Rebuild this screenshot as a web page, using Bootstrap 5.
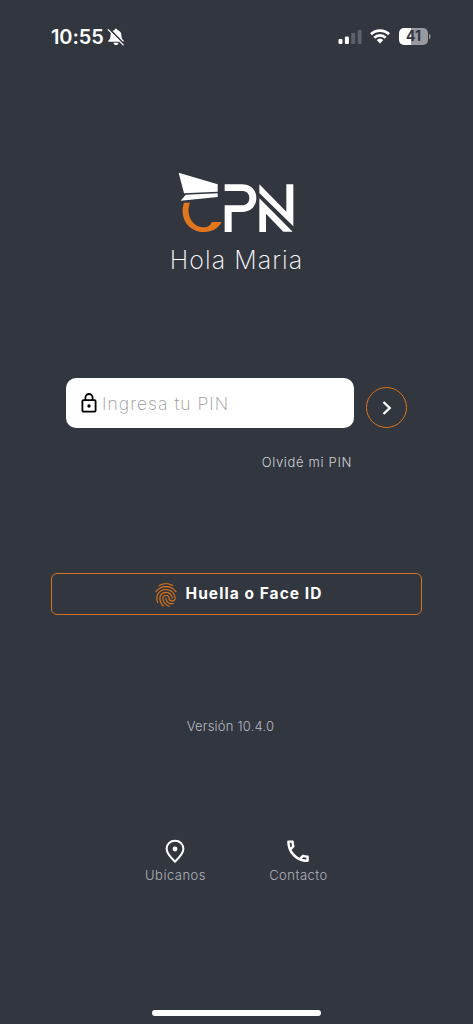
<!DOCTYPE html>
<html lang="es">

<head>
    <meta charset="UTF-8">
    <meta name="viewport" content="width=device-width, initial-scale=1.0">
    <title>CPN</title>
    <link rel="stylesheet" href="https://cdn.jsdelivr.net/npm/bootstrap@5.3.3/dist/css/bootstrap.min.css">
    <style>
        body {
            background: #32363f;
            color: #fff;
            font-family: Inter, "Open Sans", sans-serif;
            font-weight: 300;
            line-height: 1;
        }

        svg {
            display: block;
            flex: none;
        }

        .screen {
            height: 1024px;
            overflow: hidden;
        }

        .status-bar {
            height: 73px;
            padding: 0 42px 0 51px;
        }

        .clock {
            font-size: 20px;
            font-weight: 600;
            letter-spacing: -.1px;
        }

        .bell {
            margin-left: 3px;
        }

        .wifi {
            margin: 0 8px;
        }

        .brand {
            margin-top: 99px;
        }

        .logo {
            margin-right: 2px;
        }

        .greeting {
            font-size: 25px;
            font-weight: 200;
            letter-spacing: 1.05px;
            margin: 12px 0 0;
            height: 30px;
            white-space: nowrap;
        }

        .pin-row {
            margin: 103px 66px 0;
            height: 51px;
        }

        .pin-box {
            width: 288px;
            height: 50px;
            border-radius: 10px;
            padding-left: 15px;
        }

        .pin-input {
            color: #999;
            font-size: 17.5px;
            font-weight: 200;
            letter-spacing: 1.05px;
            padding: 3px 0 0 5px;
            background: transparent;
        }

        .pin-input::placeholder {
            color: #999;
            opacity: 1;
        }

        .go-btn {
            width: 41px;
            height: 41px;
            border: 1px solid #dd7519;
            margin: 9px 0 0 12px;
        }

        .forgot {
            color: #cfd1d5;
            font-size: 13px;
            letter-spacing: .66px;
            margin: 27px 121px 0 0;
            height: 14px;
        }

        .bio-btn {
            margin: 103px 51px 0;
            height: 42px;
            border: 1px solid #d47421;
            border-radius: 6px;
            color: #fff;
            font-size: 15.5px;
            font-weight: 700;
            letter-spacing: 1.05px;
        }

        .bio-btn:hover,
        .go-btn:hover {
            border-color: #f08a2c;
        }

        .bio-icon {
            margin: 1px 8px 0 3px;
        }

        .version {
            color: #b9bbc0;
            font-size: 13px;
            letter-spacing: .2px;
            margin: 105px 12px 0 0;
            height: 14px;
        }

        .links {
            margin-top: 105px;
            gap: 63px;
        }

        .links a {
            color: #b1b4ba;
            font-size: 13px;
            letter-spacing: .5px;
            width: 60px;
            white-space: nowrap;
        }

        .link-label {
            margin: 5px 0 0 1px;
        }

        .home-bar {
            width: 169px;
            height: 6px;
            margin-bottom: 8px;
        }
    </style>
</head>

<body>
    <div class="screen d-flex flex-column">
        <header class="status-bar d-flex align-items-center">
            <span class="clock">10:55</span>
            <svg class="bell" width="18" height="18" viewBox="0 0 18 18">
                <path fill="#fff" d="M9 .8c.8 0 1.300.5 1.400 1.200 2.600.7 4 2.700 4 5 0 3 .7 4.300 2.200 5.600.5.5.2 1.200-.5 1.200H1.900c-.7 0-1-.7-.5-1.200C2.900 11.300 3.600 10 3.600 7c0-2.300 1.400-4.300 4-5C7.700 1.300 8.200.8 9 .8zM6.500 14.700h5c-.2 1.500-1.200 2.400-2.500 2.400s-2.300-.9-2.500-2.400z" />
                <path stroke="#32363f" stroke-width="1.800" d="M2.600 1.200l14.700 15.200" />
                <path stroke="#fff" stroke-width="1.300" stroke-linecap="round" d="M1.200 1.600l15 15.300" />
            </svg>
            <div class="d-flex align-items-center ms-auto">
                <svg width="24" height="16" viewBox="0 0 24 16" fill="#fff">
                    <rect x="0.500" y="10" width="4" height="5" rx="1" />
                    <rect x="6.900" y="7.500" width="4" height="7.500" rx="1" />
                    <rect x="13.200" y="4" width="4" height="11" rx="1" fill="#5e616a" />
                    <rect x="19.600" y="1" width="4" height="14" rx="1" fill="#5e616a" />
                </svg>
                <svg class="wifi" width="20" height="15" viewBox="0 0 20 15" fill="none" stroke="#fff" stroke-width="2.800">
                    <path d="M1 5.300a12.800 12.800 0 0 1 18 0M4.300 8.700a8.200 8.200 0 0 1 11.400 0" />
                    <path fill="#fff" stroke="none" d="M6.700 11a4.800 4.800 0 0 1 6.600 0L10 14.500z" />
                </svg>
                <svg width="33" height="17" viewBox="0 0 33 17">
                    <path fill="#989a9f" d="M6 0h19a5 5 0 0 1 5 5v7a5 5 0 0 1-5 5H6z" />
                    <path fill="#fff" d="M6 0H13v17H6A5 5 0 0 1 1 12V5a5 5 0 0 1 5-5z" />
                    <path fill="#989a9f" d="M31 5.800c2 .8 2 4.600 0 5.400z" />
                    <text x="15.500" y="13.400" text-anchor="middle" font-size="14" font-weight="700" fill="#32363f">41</text>
                </svg>
            </div>
        </header>

        <main>
            <div class="brand d-flex flex-column align-items-center">
                <svg class="logo" width="116" height="61" viewBox="39 21 348 183" role="img" aria-label="CPN">
                    <g fill="#fff">
                        <path d="M41 23L158 58V80L57 85z" />
                        <path d="M62 89L158 85V96L47 107z" />
                        <path d="M179 58H231C259 58 274 76 274 99C274 123 258 141 231 141H200V201H179V121H230C245 121 253 112 253 99C253 86 245 78 230 78H179z" />
                        <path d="M283 100L383 200H355L303 146V201H283z" />
                        <path d="M283 58L364 140V58H385V184L283 84z" />
                    </g>
                    <path fill="#e2761c" d="M57 113H75C61 149 82 187 117 187C130 187 134 182 141 171H170C160 191 141 201 118 201C69 201 42 158 57 113z" />
                </svg>
                <h1 class="greeting">Hola Maria</h1>
            </div>

            <form class="pin-row d-flex">
                <label class="pin-box bg-white d-flex align-items-center">
                    <svg width="16" height="20" viewBox="0 0 16 20" fill="none" stroke="#000" stroke-width="1.800">
                        <rect x="1.400" y="7.200" width="13.200" height="11.400" rx="1" />
                        <path d="M4.400 7V4.600a3.600 3.600 0 0 1 7.200 0V7" />
                        <circle cx="8" cy="13" r="1.700" fill="#000" stroke="none" />
                    </svg>
                    <input class="pin-input form-control border-0 shadow-none" type="text" placeholder="Ingresa tu PIN">
                </label>
                <button class="go-btn btn rounded-circle p-0 d-flex flex-shrink-0 align-items-center justify-content-center" type="button" aria-label="Entrar">
                    <svg width="10" height="14" viewBox="0 0 10 14" fill="none" stroke="#fff" stroke-width="2.400">
                        <path d="M1.500 1L7.700 7L1.500 13" />
                    </svg>
                </button>
            </form>
            <div class="forgot text-end">Olvidé mi PIN</div>

            <div class="d-grid">
                <button class="bio-btn btn p-0 d-flex align-items-center justify-content-center" type="button">
                    <svg class="bio-icon" width="24" height="26" viewBox="2 1 20 22" fill="#dd7519">
                        <path d="M17.810 4.470c-.08 0-.16-.02-.23-.06C15.660 3.420 14 3 12.010 3c-1.980 0-3.860.47-5.570 1.410-.24.13-.54.04-.68-.2-.13-.24-.04-.55.2-.68C7.820 2.520 9.860 2 12.010 2c2.130 0 3.990.47 6.030 1.520.25.13.34.43.21.67-.09.18-.26.28-.44.28z" />
                        <path d="M3.500 9.720c-.1 0-.2-.03-.29-.09-.23-.16-.28-.47-.12-.7.99-1.400 2.250-2.500 3.750-3.270C9.980 4.040 14 4.030 17.150 5.650c1.500.77 2.760 1.860 3.750 3.250.16.22.11.54-.12.7-.23.16-.54.11-.7-.12-.9-1.260-2.040-2.250-3.390-2.940-2.870-1.470-6.540-1.470-9.400.01-1.360.7-2.500 1.700-3.400 2.960-.08.14-.23.21-.39.21z" />
                        <path d="M9.750 21.790c-.13 0-.26-.05-.35-.15-.87-.87-1.340-1.430-2.010-2.640-.69-1.230-1.050-2.730-1.050-4.340 0-2.970 2.540-5.390 5.660-5.390s5.660 2.420 5.660 5.390c0 .28-.22.5-.5.5s-.5-.22-.5-.5c0-2.420-2.090-4.390-4.660-4.390-2.570 0-4.660 1.970-4.660 4.390 0 1.440.32 2.770.93 3.850.64 1.150 1.080 1.640 1.850 2.420.19.2.19.51 0 .71-.11.1-.24.15-.37.15z" />
                        <path d="M16.920 19.940c-1.190 0-2.240-.3-3.100-.89-1.490-1.010-2.380-2.650-2.380-4.390 0-.28.22-.5.5-.5s.5.22.5.5c0 1.410.72 2.740 1.940 3.560.71.48 1.540.71 2.540.71.24 0 .64-.03 1.040-.1.27-.05.53.13.58.41.05.27-.13.53-.41.58-.57.11-1.070.12-1.210.12z" />
                        <path d="M14.910 22c-.04 0-.09-.01-.13-.02-1.590-.44-2.630-1.030-3.720-2.100-1.400-1.390-2.170-3.240-2.170-5.220 0-1.620 1.380-2.940 3.080-2.940 1.700 0 3.080 1.320 3.080 2.940 0 1.070.93 1.940 2.080 1.940s2.080-.87 2.080-1.940c0-3.770-3.250-6.830-7.250-6.830-2.840 0-5.440 1.580-6.610 4.030-.39.81-.59 1.760-.59 2.800 0 .78.07 2.010.67 3.610.1.26-.03.55-.29.64-.26.1-.55-.04-.64-.29-.49-1.310-.73-2.610-.73-3.960 0-1.200.23-2.290.68-3.240 1.330-2.790 4.280-4.600 7.510-4.600 4.550 0 8.250 3.510 8.250 7.830 0 1.620-1.380 2.940-3.080 2.940s-3.080-1.320-3.080-2.940c0-1.070-.93-1.940-2.080-1.940s-2.080.87-2.080 1.940c0 1.710.66 3.310 1.870 4.510.95.94 1.860 1.460 3.270 1.850.27.07.42.35.35.61-.05.23-.26.38-.47.38z" />
                    </svg>
                    <span>Huella o Face ID</span>
                </button>
            </div>

            <div class="version text-center">Versión 10.4.0</div>

            <nav class="links d-flex justify-content-center">
                <a class="d-flex flex-column align-items-center text-decoration-none" href="#">
                    <svg width="20" height="25" viewBox="0 0 20 25" fill="none" stroke="#fff" stroke-width="2">
                        <path d="M10 22.700C4.500 17.500 1.600 13.500 1.600 9.800C1.600 5 5.300 1.800 10 1.800S18.400 5 18.400 9.800C18.400 13.500 15.500 17.500 10 22.700z" />
                        <circle cx="10" cy="10" r="2.400" fill="#fff" stroke="none" />
                    </svg>
                    <span class="link-label">Ubícanos</span>
                </a>
                <a class="d-flex flex-column align-items-center text-decoration-none" href="#">
                    <svg width="24" height="25" viewBox="2 1.800 20 20.800" fill="#fff">
                        <path d="M6.540 5c.06.89.21 1.760.45 2.590l-1.200 1.200c-.41-1.200-.67-2.470-.76-3.790h1.510m9.860 12.020c.85.24 1.720.39 2.600.45v1.490c-1.320-.09-2.590-.35-3.800-.75l1.200-1.190M7.500 3H4c-.55 0-1 .45-1 1 0 9.390 7.610 17 17 17 .55 0 1-.45 1-1v-3.490c0-.55-.45-1-1-1-1.240 0-2.450-.2-3.570-.57-.1-.04-.21-.05-.31-.05-.26 0-.51.1-.71.29l-2.200 2.200c-2.830-1.450-5.150-3.760-6.590-6.590l2.200-2.200c.28-.28.36-.67.25-1.020C8.700 6.450 8.500 5.250 8.500 4c0-.55-.45-1-1-1z" />
                    </svg>
                    <span class="link-label">Contacto</span>
                </a>
            </nav>
        </main>

        <div class="home-bar bg-white rounded-pill mt-auto mx-auto"></div>
    </div>
    <script src="https://cdn.jsdelivr.net/npm/bootstrap@5.3.3/dist/js/bootstrap.bundle.min.js"></script>
</body>

</html>
